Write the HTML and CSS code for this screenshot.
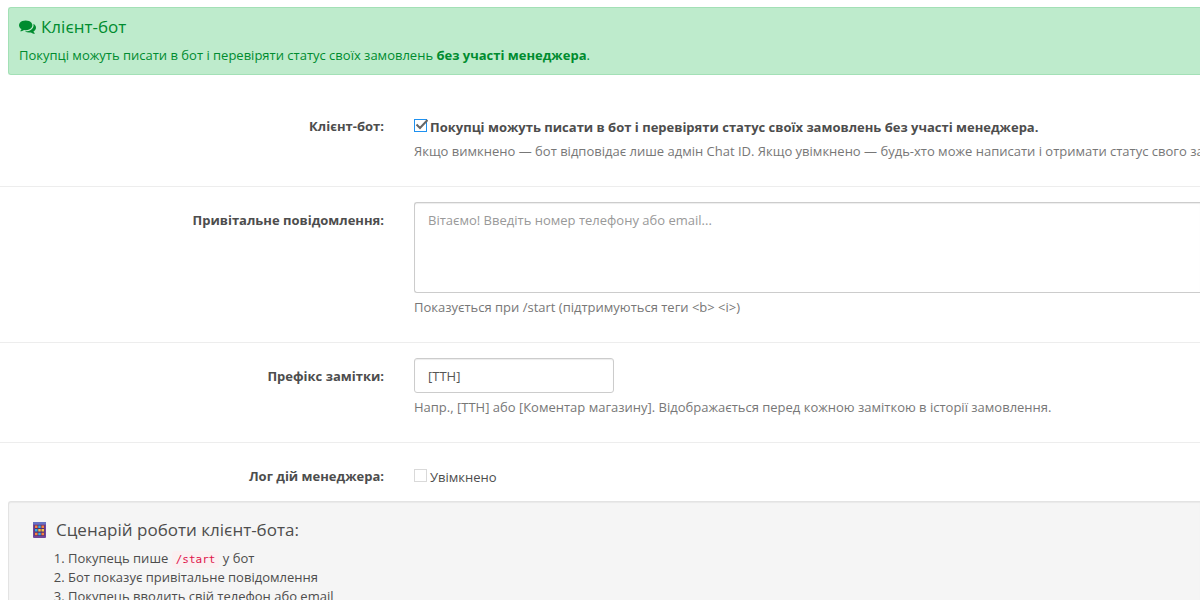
FILE: index.html
```html
<!DOCTYPE html>
<html lang="uk">
<head>
<meta charset="utf-8">
<title>Клієнт-бот</title>
<link rel="stylesheet" href="styles.css">
</head>
<body>
<main class="page">
  <section class="alert">
    <h4 class="alert-title">
      <svg class="icon-comments" viewBox="0 0 1792 1792" aria-hidden="true"><path fill="currentColor" d="M1408 768q0 139-94 257t-256.500 186.500-353.500 68.500q-86 0-176-16-124 88-278 128-36 9-86 16h-3q-11 0-20.500-8t-11.500-21q-1-3-1-6.500t.5-6.500 2-6l2.500-5 3.500-5.500 4-5 4.500-5 4-4.500q5-6 23-25t26-29.500 22.500-29 25-38.500 20.500-44q-124-72-195-177t-71-224q0-139 94-257t256.500-186.500 353.500-68.500 353.500 68.500 256.500 186.500 94 257zm384 256q0 120-71 224.500t-195 176.500q10 24 20.500 44t25 38.500 22.500 29 26 29.500 23 25q1 1 4 4.500t4.500 5 4 5 3.500 5.500l2.500 5 2 6 .5 6.500-1 6.500q-3 14-13 22t-22 7q-50-7-86-16-154-40-278-128-90 16-176 16-271 0-472-132 58 4 88 4 161 0 309-45t264-129q125-92 192-212t67-254q0-77-23-152 129 71 204 178t75 230z"/></svg>
      Клієнт-бот
    </h4>
    <p class="alert-text">Покупці можуть писати в бот і перевіряти статус своїх замовлень <b>без участі менеджера</b>.</p>
  </section>

  <form class="form">
    <div class="row">
      <label class="row-label" for="client-bot">Клієнт-бот:</label>
      <div class="row-body">
        <label class="check check-strong"><input class="check-box" id="client-bot" type="checkbox" checked><span>Покупці можуть писати в бот і перевіряти статус своїх замовлень без участі менеджера.</span></label>
        <p class="help">Якщо вимкнено — бот відповідає лише адмін Chat ID. Якщо увімкнено — будь-хто може написати і отримати статус свого замовлення.</p>
      </div>
    </div>
    <div class="row">
      <label class="row-label" for="greeting">Привітальне повідомлення:</label>
      <div class="row-body">
        <textarea class="control control-area" id="greeting" placeholder="Вітаємо! Введіть номер телефону або email..."></textarea>
        <p class="help">Показується при /start (підтримуються теги &lt;b&gt; &lt;i&gt;)</p>
      </div>
    </div>
    <div class="row">
      <label class="row-label" for="prefix">Префікс замітки:</label>
      <div class="row-body">
        <input class="control control-short" id="prefix" type="text" value="[ТТН]">
        <p class="help">Напр., [ТТН] або [Коментар магазину]. Відображається перед кожною заміткою в історії замовлення.</p>
      </div>
    </div>
    <div class="row row-last">
      <label class="row-label" for="log">Лог дій менеджера:</label>
      <div class="row-body">
        <label class="check"><input class="check-box" id="log" type="checkbox"><span>Увімкнено</span></label>
      </div>
    </div>
  </form>

  <section class="well">
    <h4 class="well-title">
      <svg class="icon-phone" viewBox="0 0 13 16" aria-hidden="true">
        <rect width="13" height="16" rx="1" fill="#71459b"/>
        <rect width="13" height="2.500" fill="#6672c4"/>
        <rect x="1.500" y="3" width="10" height="11" fill="#553070"/>
        <path fill="#f8823f" d="M2 3.500h2.500v2.500H2zM8.500 3.500H11v2.500H8.500zM2 10.700h2.500v2.500H2zM8.500 10.700H11v2.500H8.500z"/>
        <path fill="#2fb0ea" d="M5.300 3.500h2.400v2.500H5.300zM2 7.100h2.500v2.500H2zM5.300 10.700h2.400v2.500H5.300z"/>
        <path fill="#f8c544" d="M5.300 7.100h2.400v2.500H5.300zM8.500 7.100H11v2.500H8.500z"/>
      </svg>
      Сценарій роботи клієнт-бота:
    </h4>
    <ol class="steps">
      <li>Покупець пише <code class="code">/start</code> у бот</li>
      <li>Бот показує привітальне повідомлення</li>
      <li>Покупець вводить свій телефон або email</li>
    </ol>
  </section>
</main>
</body>
</html>
```
FILE: styles.css
```css
* { box-sizing: border-box; }

body {
  margin: 0;
  height: 100vh;
  overflow: hidden;
  background: #fff;
  color: #4d4d4d;
  font: 13px/19px "Open Sans", "Noto Sans", sans-serif;
}

.page { padding-top: 7px; }

.alert {
  margin-left: 8px;
  padding: 9px 10px;
  border: 1px solid #a3e0b6;
  border-right: 0;
  border-radius: 3px 0 0 3px;
  background: #beebcc;
  color: #008c2f;
}

.alert-title,
.well-title {
  display: flex;
  align-items: center;
  margin: 0;
  font-size: 17px;
  font-weight: 400;
  line-height: 19px;
}

.alert-title { gap: 5px; margin-bottom: 10px; }
.alert-text { margin: 0; }
.icon-comments { width: 17px; height: 17px; }

.form { padding-top: 18px; }

.row {
  display: grid;
  grid-template-columns: 32% minmax(0, 1fr);
  column-gap: 30px;
  padding: 15px 0 25px;
  border-bottom: 1px solid #ededed;
}

.row-last { padding-bottom: 14px; border-bottom: 0; }

.row-label {
  padding-top: 9px;
  font-weight: 700;
  text-align: right;
}

.row-body { overflow: hidden; }

.check {
  display: flex;
  align-items: flex-start;
  gap: 3px;
  padding-top: 10px;
}

.check-strong { font-weight: 700; }

.check-box {
  position: relative;
  flex: none;
  width: 13px;
  height: 13px;
  margin: 1px 0 0;
  appearance: none;
  border: 1px solid #d9d9d9;
  background: #fff;
}

.check-box:checked { border-color: #1e91f0; }

.check-box:checked::after {
  content: "";
  position: absolute;
  top: -1px;
  left: 0;
  width: 13px;
  height: 12px;
  background: url("data:image/svg+xml,%3Csvg xmlns='http://www.w3.org/2000/svg' viewBox='0 0 13 12'%3E%3Cpath d='M1.500 5.500L5 9L12.500 1' fill='none' stroke='%23666' stroke-width='2'/%3E%3C/svg%3E");
}

.help {
  margin: 5px 0 0;
  color: #777;
  white-space: nowrap;
}

.control {
  display: block;
  border: 1px solid #ccc;
  border-radius: 3px;
  padding: 8px 13px;
  background: #fff;
  box-shadow: inset 0 1px 1px rgba(0, 0, 0, 0.075);
  color: #555;
  font: inherit;
}

.control::placeholder { color: #999; }

.control-area {
  width: 100%;
  height: 91px;
  border-right: 0;
  border-radius: 3px 0 0 3px;
  resize: none;
}

.control-short { width: 200px; height: 35px; }

.well {
  margin-left: 8px;
  padding: 18px 24px;
  border: 1px solid #e3e3e3;
  border-right: 0;
  border-radius: 3px 0 0 3px;
  background: #f5f5f5;
  box-shadow: inset 0 1px 1px rgba(0, 0, 0, 0.05);
}

.well-title { gap: 10px; margin-bottom: 10px; }
.icon-phone { width: 13px; height: 16px; }

.steps { margin: 0; padding-left: 35px; }

.code {
  padding: 2px 4px;
  border-radius: 3px;
  background: #faf0f1;
  color: #e0144c;
  font: 11px/15px "DejaVu Sans Mono", monospace;
}
```
